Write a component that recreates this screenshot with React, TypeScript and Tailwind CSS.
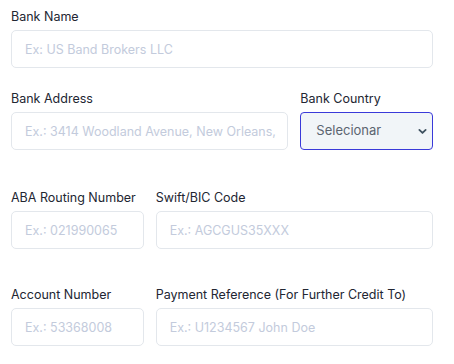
import { ChangeEvent, useState } from "react";

const Field = ({
  label,
  placeholder,
  className,
}: {
  label: string;
  placeholder: string;
  className?: string;
}) => {
  const [value, setValue] = useState("");
  return (
    <div className={`flex flex-col ${className ?? ""}`}>
      <label className="h-5 mb-[3px] text-[12.5px] leading-5 text-[#222632] whitespace-nowrap">
        {label}
      </label>
      <input
        value={value}
        onChange={(e: ChangeEvent<HTMLInputElement>) => setValue(e.target.value)}
        placeholder={placeholder}
        className="h-[38px] w-full min-w-0 rounded-[5px] border border-[#e3e7ec] bg-white pl-[13px] pr-2 text-[12.5px] text-[#232733] placeholder:text-[#c3cbdc] outline-none"
      />
    </div>
  );
};

const App = () => {
  const [country, setCountry] = useState("");

  return (
    <div
      className="w-[454px] h-[364px] bg-white overflow-hidden"
      style={{ fontFamily: "Inter, 'Noto Sans', sans-serif" }}
    >
      <div className="ml-[11px] w-[422px] pt-[7px]">
        <Field label="Bank Name" placeholder="Ex: US Band Brokers LLC" />

        <div className="grid grid-cols-3 gap-x-3 mt-[21px]">
          <Field
            className="col-span-2"
            label="Bank Address"
            placeholder="Ex.: 3414 Woodland Avenue, New Orleans, LA"
          />
          <div className="flex flex-col">
            <label className="h-5 mb-[3px] text-[12.5px] leading-5 text-[#222632] whitespace-nowrap">
              Bank Country
            </label>
            <div className="relative">
              <select
                value={country}
                onChange={(e) => setCountry(e.target.value)}
                className="h-[38px] w-full appearance-none rounded-[4px] border border-[#3a3ad9] bg-[#f1f5f8] pl-[15px] text-[13px] text-[#5b6470] outline-none"
              >
                <option value="">Selecionar</option>
                <option value="us">United States</option>
                <option value="br">Brasil</option>
              </select>
              <svg
                className="pointer-events-none absolute right-[6px] top-[15px] h-[9px] w-[9px]"
                viewBox="0 0 10 10"
                fill="none"
              >
                <path
                  d="M1.5 3.2 5 6.6 8.5 3.2"
                  stroke="#3f5260"
                  strokeWidth="2"
                  strokeLinecap="round"
                  strokeLinejoin="round"
                />
              </svg>
            </div>
          </div>
        </div>

        <div className="grid grid-cols-3 gap-x-3 mt-[38px]">
          <Field label="ABA Routing Number" placeholder="Ex.: 021990065" />
          <Field
            className="col-span-2"
            label="Swift/BIC Code"
            placeholder="Ex.: AGCGUS35XXX"
          />
        </div>

        <div className="grid grid-cols-3 gap-x-3 mt-[36px]">
          <Field label="Account Number" placeholder="Ex.: 53368008" />
          <Field
            className="col-span-2"
            label="Payment Reference (For Further Credit To)"
            placeholder="Ex.: U1234567 John Doe"
          />
        </div>
      </div>
    </div>
  );
};

export default App;
